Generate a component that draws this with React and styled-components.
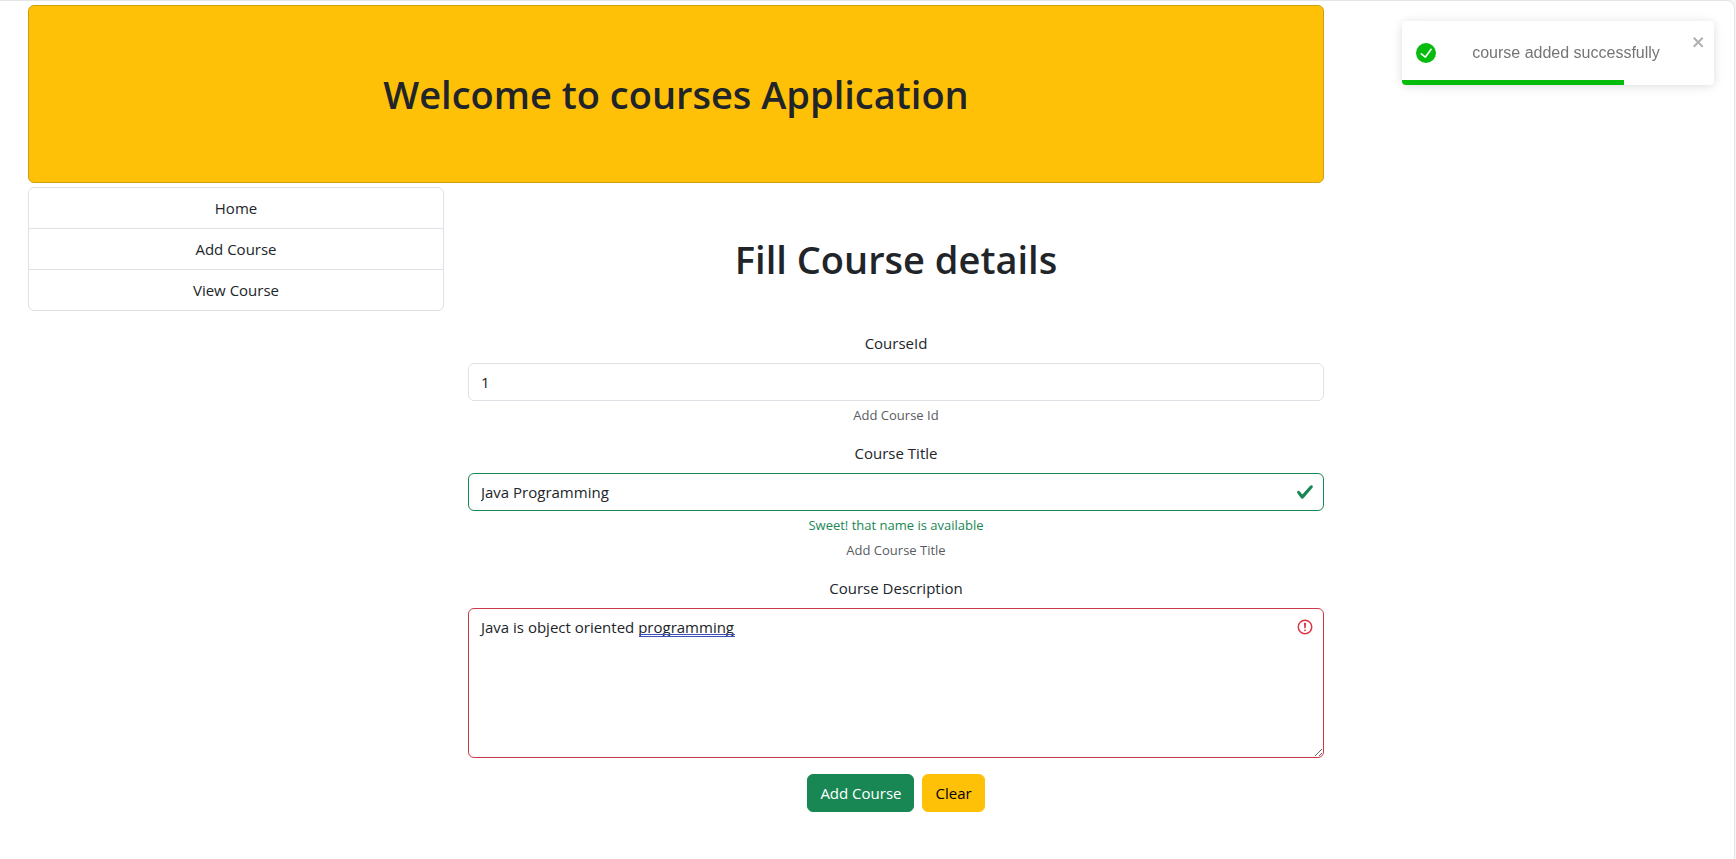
import React, { useState } from "react";
import styled, { createGlobalStyle } from "styled-components";

const GlobalStyle = createGlobalStyle`
  *, *::before, *::after { box-sizing: border-box; }
  html { background: #f6f6f7; }
  body {
    margin: 0;
    color: #212529;
    font-family: "Segoe UI", "Open Sans", "Noto Sans", sans-serif;
    font-size: 15px;
    line-height: 24px;
  }
`;

const Page = styled.div`
  min-height: 100vh;
  margin-right: 1px;
  background: #fff;
  border-top: 1px solid #e5e5e8;
  border-right: 1px solid #e5e5e8;
  border-top-right-radius: 8px;
`;

const Container = styled.div`
  max-width: 1320px;
  margin-left: 16px;
  padding: 4px 12px;
`;

const Banner = styled.header`
  margin-bottom: 4px;
  padding: 64px 16px;
  background: #ffc107;
  border: 1px solid #cf9f10;
  border-radius: 6px;
  text-align: center;
`;

const Title = styled.h1`
  margin: 0;
  font-size: 38px;
  font-weight: 600;
  line-height: 48px;
`;

const Columns = styled.div`
  display: grid;
  grid-template-columns: minmax(0, 416fr) minmax(0, 856fr);
  gap: 24px;
  align-items: start;
`;

const Menu = styled.nav`
  border: 1px solid #dee2e6;
  border-radius: 6px;
  overflow: hidden;
`;

const MenuLink = styled.a`
  display: block;
  padding: 8px 16px;
  color: inherit;
  text-align: center;
  text-decoration: none;

  & + & { border-top: 1px solid #dee2e6; }
`;

const Form = styled.form`
  display: flex;
  flex-direction: column;
  gap: 16px;
  padding-top: 48px;
  text-align: center;
`;

const FormHeading = styled(Title)`
  margin-bottom: 32px;
`;

const Field = styled.div`
  display: flex;
  flex-direction: column;
`;

const Label = styled.label`
  margin-bottom: 8px;
`;

const tones = { plain: "#dee2e6", valid: "#198754", invalid: "#cb3a4b" };

const ControlWrap = styled.div`
  display: flex;
  position: relative;
`;

const Input = styled.input`
  width: 100%;
  padding: 6px 12px;
  color: inherit;
  font: inherit;
  background: #fff;
  border: 1px solid ${(p) => tones[p.$tone || "plain"]};
  border-radius: 6px;
  outline: none;
`;

const TextArea = styled(Input)`
  height: 150px;
  resize: vertical;
`;

const StateIcon = styled.svg`
  position: absolute;
  top: 10px;
  right: 10px;
  width: 18px;
  height: 18px;
  pointer-events: none;
`;

const GrammarMark = styled.span`
  position: absolute;
  top: 26px;
  left: 171px;
  width: 96px;
  height: 3px;
  border-top: 1px solid #3c50b8;
  border-bottom: 1px solid #3c50b8;
  pointer-events: none;
`;

const Hint = styled.div`
  margin-top: 4px;
  color: #595c5f;
  font-size: 13px;
  line-height: 20px;
`;

const Feedback = styled(Hint)`
  color: #198754;
  line-height: 21px;
`;

const Actions = styled.div`
  display: flex;
  justify-content: center;
  gap: 8px;
`;

const Button = styled.button`
  padding: 6px 12px;
  color: ${(p) => (p.$warning ? "#000" : "#fff")};
  font: inherit;
  background: ${(p) => (p.$warning ? "#ffc107" : "#198754")};
  border: 1px solid ${(p) => (p.$warning ? "#ffc107" : "#198754")};
  border-radius: 6px;
  cursor: pointer;
`;

const Toast = styled.div`
  position: fixed;
  top: 21px;
  right: 22px;
  display: flex;
  align-items: flex-start;
  width: 312px;
  height: 64px;
  padding: 8px;
  overflow: hidden;
  color: #757575;
  background: #fff;
  border-radius: 4px;
  box-shadow: 0 1px 10px rgba(0, 0, 0, 0.1), 0 2px 15px rgba(0, 0, 0, 0.05);
  font-family: "Liberation Sans", Arial, sans-serif;
  font-size: 16px;
`;

const ToastBody = styled.div`
  display: flex;
  flex: 1;
  align-items: center;
  align-self: center;
  gap: 10px;
  padding: 6px;
`;

const ToastIcon = styled.svg`
  width: 20px;
  height: 20px;
  fill: #07bc0c;
`;

const ToastText = styled.div`
  flex: 1;
  text-align: center;
`;

const CloseButton = styled.button`
  display: flex;
  padding: 5px 0 0;
  color: #000;
  background: transparent;
  border: 0;
  opacity: 0.3;
  cursor: pointer;
`;

const ProgressBar = styled.div`
  position: absolute;
  bottom: 0;
  left: 0;
  width: 71%;
  height: 5px;
  background: #07bc0c;
`;

function Notification({ children }) {
  return (
    <Toast role="alert">
      <ToastBody>
        <ToastIcon viewBox="0 0 24 24" aria-hidden="true">
          <path d="M12 0a12 12 0 1012 12A12.014 12.014 0 0012 0zm6.927 8.2l-6.845 9.289a1.011 1.011 0 01-1.43.188l-4.888-3.908a1 1 0 111.25-1.562l4.076 3.261 6.227-8.451a1 1 0 111.61 1.183z" />
        </ToastIcon>
        <ToastText>{children}</ToastText>
      </ToastBody>
      <CloseButton type="button" aria-label="close">
        <svg width="14" height="16" viewBox="0 0 14 16" fill="currentColor" aria-hidden="true">
          <path
            fillRule="evenodd"
            d="M7.71 8.23l3.75 3.75-1.48 1.48-3.75-3.75-3.75 3.75L1 11.98l3.75-3.75L1 4.48 2.48 3l3.75 3.75L9.98 3l1.48 1.48-3.75 3.75z"
          />
        </svg>
      </CloseButton>
      <ProgressBar />
    </Toast>
  );
}

const initialDescription = "Java is object oriented programming";

export default function App() {
  const [id, setId] = useState("1");
  const [title, setTitle] = useState("Java Programming");
  const [description, setDescription] = useState(initialDescription);

  const clear = () => {
    setId("");
    setTitle("");
    setDescription("");
  };

  return (
    <>
      <GlobalStyle />
      <Page>
        <Container>
          <Banner>
            <Title>Welcome to courses Application</Title>
          </Banner>
          <Columns>
            <Menu>
              <MenuLink href="#home">Home</MenuLink>
              <MenuLink href="#add-course">Add Course</MenuLink>
              <MenuLink href="#view-course">View Course</MenuLink>
            </Menu>
            <Form onSubmit={(e) => e.preventDefault()}>
              <FormHeading>Fill Course details</FormHeading>
              <Field>
                <Label htmlFor="course-id">CourseId</Label>
                <ControlWrap>
                  <Input id="course-id" value={id} onChange={(e) => setId(e.target.value)} />
                </ControlWrap>
                <Hint>Add Course Id</Hint>
              </Field>
              <Field>
                <Label htmlFor="course-title">Course Title</Label>
                <ControlWrap>
                  <Input
                    id="course-title"
                    $tone="valid"
                    value={title}
                    onChange={(e) => setTitle(e.target.value)}
                  />
                  <StateIcon viewBox="0 0 8 8" fill="#198754" aria-hidden="true">
                    <path d="M2.3 6.73.6 4.53c-.4-1.04.46-1.4 1.1-.8l1.1 1.4 3.4-3.8c.6-.63 1.6-.27 1.2.7l-4 4.6c-.43.5-.8.4-1.1.1z" />
                  </StateIcon>
                </ControlWrap>
                <Feedback>Sweet! that name is available</Feedback>
                <Hint>Add Course Title</Hint>
              </Field>
              <Field>
                <Label htmlFor="course-description">Course Description</Label>
                <ControlWrap>
                  <TextArea
                    as="textarea"
                    id="course-description"
                    $tone="invalid"
                    spellCheck={false}
                    value={description}
                    onChange={(e) => setDescription(e.target.value)}
                  />
                  {description === initialDescription && <GrammarMark />}
                  <StateIcon viewBox="0 0 12 12" fill="none" stroke="#dc3545" aria-hidden="true">
                    <circle cx="6" cy="6" r="4.5" />
                    <path strokeLinejoin="round" d="M5.8 3.6h.4L6 6.5z" />
                    <circle cx="6" cy="8.2" r=".6" fill="#dc3545" stroke="none" />
                  </StateIcon>
                </ControlWrap>
              </Field>
              <Actions>
                <Button type="submit">Add Course</Button>
                <Button type="button" $warning onClick={clear}>
                  Clear
                </Button>
              </Actions>
            </Form>
          </Columns>
        </Container>
      </Page>
      <Notification>course added successfully</Notification>
    </>
  );
}
